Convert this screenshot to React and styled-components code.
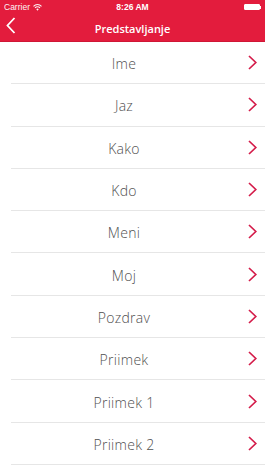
import React from "react";
import styled, { createGlobalStyle } from "styled-components";

const GlobalStyle = createGlobalStyle`
  html, body {
    margin: 0;
    padding: 0;
    background: #fff;
    font-family: "Open Sans", "Liberation Sans", sans-serif;
  }
`;

const items = [
  "Ime",
  "Jaz",
  "Kako",
  "Kdo",
  "Meni",
  "Moj",
  "Pozdrav",
  "Priimek",
  "Priimek 1",
  "Priimek 2",
];

const App = () => {
  return (
    <Screen>
      <GlobalStyle />
      <Header>
        <StatusBar>
          <Carrier>
            Carrier
            <svg width="9" height="7" viewBox="0 0 9 7">
              <path d="M0.5 2.3 A5.5 5.5 0 0 1 8.5 2.3" stroke="#fff" strokeWidth="1.1" fill="none" />
              <path d="M2 3.8 A3.4 3.4 0 0 1 7 3.8" stroke="#fff" strokeWidth="1.1" fill="none" />
              <path d="M4.5 6.8 L3.3 5.3 A1.6 1.6 0 0 1 5.7 5.3 Z" fill="#fff" />
            </svg>
          </Carrier>
          <Clock>8:26 AM</Clock>
          <Battery>
            <BatteryBody />
            <BatteryTip />
          </Battery>
        </StatusBar>
        <NavBar>
          <BackButton>
            <svg width="10" height="17" viewBox="0 0 10 17">
              <path d="M8.5 1 L1.5 8.5 L8.5 16" stroke="#fff" strokeWidth="1.8" fill="none" />
            </svg>
          </BackButton>
          <Title>Predstavljanje</Title>
        </NavBar>
      </Header>
      <List>
        {items.map((item) => (
          <Row key={item}>
            <Label>{item}</Label>
            <Chevron>
              <svg width="9" height="15" viewBox="0 0 9 15">
                <path d="M1 1 L7.8 7.5 L1 14" stroke="#d41c4a" strokeWidth="1.7" fill="none" />
              </svg>
            </Chevron>
          </Row>
        ))}
      </List>
    </Screen>
  );
};

const Screen = styled.div`
  width: 265px;
  height: 471px;
  overflow: hidden;
  background: #fff;
`;

const Header = styled.header`
  background: #e31c3d;
  height: 42px;
  box-sizing: border-box;
  border-bottom: 1px solid #cf1736;
`;

const StatusBar = styled.div`
  height: 14px;
  display: grid;
  grid-template-columns: 1fr auto 1fr;
  align-items: center;
  padding: 0 4px;
  color: #fff;
  font-family: "Liberation Sans", Arial, sans-serif;
  font-size: 8.5px;
`;

const Carrier = styled.div`
  display: flex;
  align-items: center;
  gap: 3px;
  opacity: 0.95;
`;

const Clock = styled.div`
  font-weight: bold;
`;

const Battery = styled.div`
  justify-self: end;
  display: flex;
  align-items: center;
`;

const BatteryBody = styled.div`
  width: 14px;
  height: 4px;
  border: 1px solid #fff;
  border-radius: 1px;
  background: #fff;
`;

const BatteryTip = styled.div`
  width: 1px;
  height: 3px;
  background: #fff;
`;

const NavBar = styled.div`
  height: 27px;
  display: flex;
  align-items: center;
  justify-content: center;
  position: relative;
`;

const BackButton = styled.div`
  position: absolute;
  left: 6px;
  top: 3px;
  display: flex;
`;

const Title = styled.div`
  color: #fff;
  font-size: 11px;
  font-weight: 600;
  padding-top: 1px;
`;

const List = styled.div`
  display: flex;
  flex-direction: column;
`;

const Row = styled.div`
  height: 42.3px;
  box-sizing: border-box;
  margin-left: 11px;
  border-bottom: 1px solid #e6e6e6;
  display: flex;
  align-items: center;
`;

const Label = styled.div`
  flex: 1;
  text-align: center;
  margin-left: -11px;
  padding-top: 2px;
  font-size: 14px;
  font-weight: 300;
  letter-spacing: 0.3px;
  color: #4f4f4f;
`;

const Chevron = styled.div`
  flex-shrink: 0;
  width: 17px;
  padding-right: 8px;
  box-sizing: border-box;
  display: flex;
  justify-content: flex-end;
`;

export default App;
